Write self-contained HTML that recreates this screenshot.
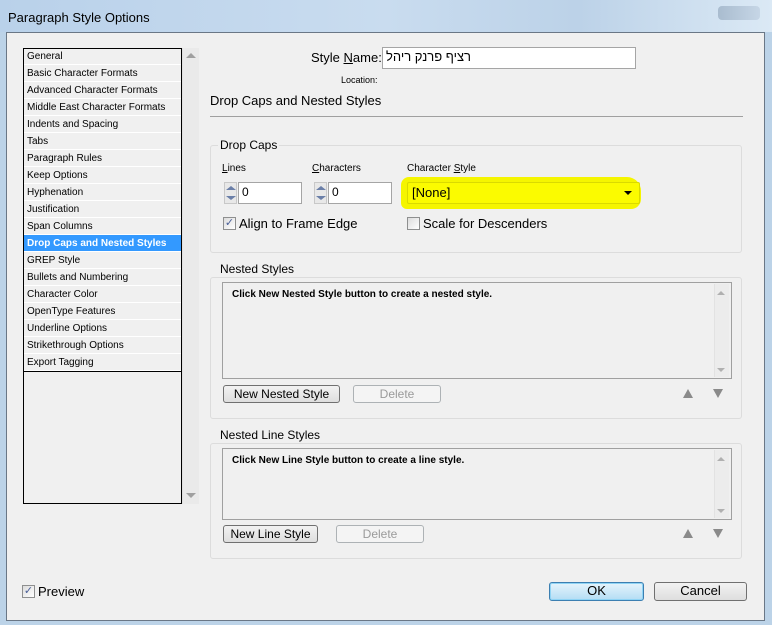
<!DOCTYPE html>
<html><head><meta charset="utf-8"><style>
*{box-sizing:border-box;margin:0;padding:0}
body{width:772px;height:625px;overflow:hidden;position:relative;background:#bcd3e8;font-family:"Liberation Sans","DejaVu Sans",sans-serif;font-size:12px;color:#000}
.a{position:absolute}
.title{left:0;top:0;width:772px;height:32px;background:linear-gradient(90deg,#b9d1ea,#c9dcef 50%,#bcd2e8 75%,#dbe9f5);}
.body{left:6px;top:32px;width:759px;height:589px;background:#f0f0f0;border:1px solid #6a7786}
.t{white-space:nowrap}
.li{left:24px;width:157px;height:17px;border-bottom:1px solid #fff;font-size:10px;line-height:17px;padding-left:3px}
.grp{border:1px solid #dcdcdc;border-radius:3px;background:#f0f0f0}
.gt{background:#f0f0f0;padding:0 2px;font-size:12px}
.inp{background:#fff;border:1px solid #a5a5a5;font-size:12px;line-height:18px;padding-left:3px}
.spin{border:1px solid #c8c8c8;background:#e8e8e8}
.btn{border:1px solid #707070;border-radius:3px;background:linear-gradient(#f2f2f2,#dedede);text-align:center;font-size:12px;line-height:16px}
.btnd{border:1px solid #adb2b5;border-radius:3px;background:#f4f4f4;color:#9a9a9a;text-align:center;font-size:12px;line-height:16px}
.cb{width:13px;height:13px;border:1px solid #8e8f8f;background:linear-gradient(135deg,#dcdcdc,#fff);font-size:11px;line-height:11px;text-align:center;color:#4a5f97}
.tri{width:0;height:0;border-left:5px solid transparent;border-right:5px solid transparent}
</style></head><body>
<div class="a title"></div>
<div class="a t" style="left:8px;top:10px;font-size:13px">Paragraph Style Options</div>
<div class="a" style="left:718px;top:6px;width:42px;height:14px;background:linear-gradient(90deg,#a9bccf,#c6d6e6);border-radius:4px"></div>
<div class="a body"></div>

<!-- list -->
<div class="a" style="left:23px;top:48px;width:159px;height:456px;border:1px solid #000;background:#f0f0f0"></div>
<div class="a" style="left:182px;top:48px;width:17px;height:456px;background:#eaeaea;border-left:1px solid #e0e0e0"></div>
<div class="a tri" style="left:186px;top:53px;border-bottom:5px solid #a0a0a0"></div>
<div class="a tri" style="left:186px;top:493px;border-top:5px solid #a0a0a0"></div>
<div class="a li" style="top:48px">General</div>
<div class="a li" style="top:65px">Basic Character Formats</div>
<div class="a li" style="top:82px">Advanced Character Formats</div>
<div class="a li" style="top:99px">Middle East Character Formats</div>
<div class="a li" style="top:116px">Indents and Spacing</div>
<div class="a li" style="top:133px">Tabs</div>
<div class="a li" style="top:150px">Paragraph Rules</div>
<div class="a li" style="top:167px">Keep Options</div>
<div class="a li" style="top:184px">Hyphenation</div>
<div class="a li" style="top:201px">Justification</div>
<div class="a li" style="top:218px">Span Columns</div>
<div class="a li" style="top:235px;background:#3399ff;color:#fff;font-weight:bold">Drop Caps and Nested Styles</div>
<div class="a li" style="top:252px">GREP Style</div>
<div class="a li" style="top:269px">Bullets and Numbering</div>
<div class="a li" style="top:286px">Character Color</div>
<div class="a li" style="top:303px">OpenType Features</div>
<div class="a li" style="top:320px">Underline Options</div>
<div class="a li" style="top:337px">Strikethrough Options</div>
<div class="a li" style="top:354px">Export Tagging</div>
<div class="a" style="left:24px;top:371px;width:157px;height:1px;background:#000"></div>

<!-- header -->
<div class="a t" style="left:311px;top:50px;font-size:13px">Style <u>N</u>ame:</div>
<div class="a inp" style="left:382px;top:47px;width:254px;height:22px;padding-left:3px;font-size:13px;text-align:left"><span dir="rtl">רציף פרנק ריהל</span></div>
<div class="a t" style="left:341px;top:75px;font-size:9px">Location:</div>
<div class="a t" style="left:210px;top:93px;font-size:13px">Drop Caps and Nested Styles</div>
<div class="a" style="left:210px;top:116px;width:533px;height:1px;background:#a0a0a0"></div>

<!-- Drop caps -->
<div class="a grp" style="left:210px;top:145px;width:532px;height:108px"></div>
<div class="a t gt" style="left:218px;top:138px">Drop Caps</div>
<div class="a t" style="left:222px;top:163px;font-size:10px"><u>L</u>ines</div>
<div class="a t" style="left:312px;top:163px;font-size:10px"><u>C</u>haracters</div>
<div class="a t" style="left:407px;top:163px;font-size:10px">Character <u>S</u>tyle</div>
<div class="a spin" style="left:224px;top:182px;width:13px;height:22px"></div>
<div class="a tri" style="left:226px;top:186px;border-bottom:4px solid #6b7fa8"></div>
<div class="a tri" style="left:226px;top:196px;border-top:4px solid #6b7fa8"></div>
<div class="a inp" style="left:238px;top:182px;width:64px;height:22px">0</div>
<div class="a spin" style="left:314px;top:182px;width:13px;height:22px"></div>
<div class="a tri" style="left:316px;top:186px;border-bottom:4px solid #6b7fa8"></div>
<div class="a tri" style="left:316px;top:196px;border-top:4px solid #6b7fa8"></div>
<div class="a inp" style="left:328px;top:182px;width:64px;height:22px">0</div>
<div class="a" style="left:401px;top:177px;width:240px;height:32px;background:#f5f500;border-radius:8px 14px 10px 6px"></div>
<div class="a" style="left:407px;top:182px;width:233px;height:22px;background:#fbfb00;border:1px solid #dada00;border-radius:2px;font-size:13px;line-height:20px;padding-left:4px">[None]</div>
<div class="a tri" style="left:624px;top:191px;border-left-width:4px;border-right-width:4px;border-top:4px solid #000"></div>
<div class="a cb" style="left:223px;top:217px">✓</div>
<div class="a t" style="left:239px;top:216px;font-size:13px">Align to Frame Edge</div>
<div class="a cb" style="left:407px;top:217px"></div>
<div class="a t" style="left:423px;top:216px;font-size:13px">Scale for Descenders</div>

<!-- Nested styles -->
<div class="a grp" style="left:210px;top:277px;width:532px;height:142px"></div>
<div class="a t gt" style="left:218px;top:262px">Nested Styles</div>
<div class="a" style="left:222px;top:282px;width:510px;height:97px;border:1px solid #a0a0a0"></div>
<div class="a" style="left:714px;top:284px;width:15px;height:93px;background:#ececec;border-left:1px solid #e2e2e2"></div>
<div class="a tri" style="left:717px;top:291px;border-left-width:4px;border-right-width:4px;border-bottom:4px solid #b0b0b0"></div>
<div class="a tri" style="left:717px;top:368px;border-left-width:4px;border-right-width:4px;border-top:4px solid #b0b0b0"></div>
<div class="a t" style="left:232px;top:289px;font-size:10px;font-weight:bold">Click New Nested Style button to create a nested style.</div>
<div class="a btn" style="left:223px;top:385px;width:117px;height:18px">New Nested Style</div>
<div class="a btnd" style="left:353px;top:385px;width:88px;height:18px">Delete</div>
<div class="a tri" style="left:683px;top:389px;border-bottom:9px solid #8a8a8a"></div>
<div class="a tri" style="left:713px;top:389px;border-top:9px solid #8a8a8a"></div>

<!-- Nested line styles -->
<div class="a grp" style="left:210px;top:443px;width:532px;height:116px"></div>
<div class="a t gt" style="left:218px;top:428px">Nested Line Styles</div>
<div class="a" style="left:222px;top:448px;width:510px;height:72px;border:1px solid #a0a0a0"></div>
<div class="a" style="left:714px;top:450px;width:15px;height:68px;background:#ececec;border-left:1px solid #e2e2e2"></div>
<div class="a tri" style="left:717px;top:457px;border-left-width:4px;border-right-width:4px;border-bottom:4px solid #b0b0b0"></div>
<div class="a tri" style="left:717px;top:509px;border-left-width:4px;border-right-width:4px;border-top:4px solid #b0b0b0"></div>
<div class="a t" style="left:232px;top:455px;font-size:10px;font-weight:bold">Click New Line Style button to create a line style.</div>
<div class="a btn" style="left:223px;top:525px;width:95px;height:18px">New Line Style</div>
<div class="a btnd" style="left:336px;top:525px;width:88px;height:18px">Delete</div>
<div class="a tri" style="left:683px;top:529px;border-bottom:9px solid #8a8a8a"></div>
<div class="a tri" style="left:713px;top:529px;border-top:9px solid #8a8a8a"></div>

<!-- footer -->
<div class="a cb" style="left:22px;top:585px">✓</div>
<div class="a t" style="left:38px;top:584px;font-size:13px">Preview</div>
<div class="a btn" style="left:549px;top:582px;width:95px;height:19px;border-color:#3c7fb1;background:linear-gradient(#e5f4fc,#b4ddf4);box-shadow:inset 0 0 0 1px #8fd4f5;font-size:13px">OK</div>
<div class="a btn" style="left:654px;top:582px;width:93px;height:19px;font-size:13px">Cancel</div>
</body></html>
